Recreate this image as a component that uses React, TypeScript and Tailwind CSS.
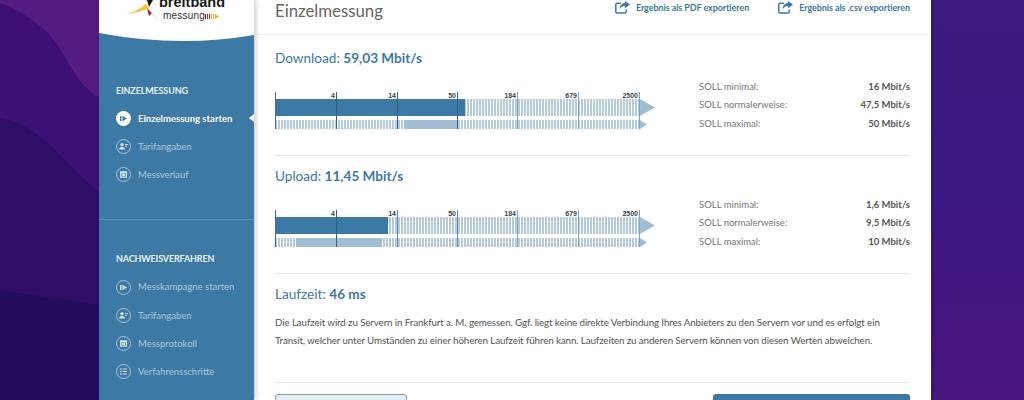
import React from 'react';

const blue = '#3d79a5';
const ticks = [
  { x: 61, label: '4' },
  { x: 122, label: '14' },
  { x: 182, label: '50' },
  { x: 242, label: '184' },
  { x: 303, label: '679' },
  { x: 364, label: '2500' },
];

type NavIconKind = 'play' | 'user' | 'calendar' | 'list';

const NavIcon = ({ kind, active }: { kind: NavIconKind; active?: boolean }) => {
  const fg = active ? blue : '#d5e3ed';
  return (
    <svg viewBox="0 0 15 15" className="w-[15px] h-[15px] shrink-0">
      <circle cx="7.5" cy="7.5" r={active ? 7.5 : 7} fill={active ? '#fff' : 'none'} stroke={active ? 'none' : '#c3d6e4'} strokeWidth="0.8" />
      {kind === 'play' && (
        <g fill={fg}>
          <rect x="4" y="5" width="1.5" height="5" />
          <path d="M6.5 4.7 11 7.5 6.5 10.3z" />
        </g>
      )}
      {kind === 'user' && (
        <g fill={fg}>
          <circle cx="6" cy="5.8" r="1.7" />
          <path d="M3 10.6c0-1.7 1.3-2.5 3-2.5s3 .8 3 2.5z" />
          <rect x="9" y="5" width="3" height="0.9" />
          <rect x="9" y="6.8" width="2" height="0.9" />
        </g>
      )}
      {kind === 'calendar' && (
        <g fill={fg}>
          <path d="M4 4.2h7v6.6H4zM5.2 6.4v3.2h4.6V6.4z" fillRule="evenodd" />
          <rect x="6" y="7" width="3" height="2" />
        </g>
      )}
      {kind === 'list' && (
        <g fill={fg}>
          <circle cx="4.8" cy="5" r="0.8" />
          <circle cx="4.8" cy="7.5" r="0.8" />
          <circle cx="4.8" cy="10" r="0.8" />
          <rect x="6.5" y="4.5" width="4.5" height="1" />
          <rect x="6.5" y="7" width="4.5" height="1" />
          <rect x="6.5" y="9.5" width="4.5" height="1" />
        </g>
      )}
    </svg>
  );
};

const NavItem = ({ kind, label, active }: { kind: NavIconKind; label: string; active?: boolean }) => (
  <div className="relative flex items-center gap-[7px] h-[28.3px] pl-[17px]">
    <NavIcon kind={kind} active={active} />
    <span className={active ? 'pt-[1px] text-[9.5px] font-bold text-white' : 'pt-[1px] text-[9.5px] text-[#aec8da]'}>{label}</span>
    {active && <span className="absolute right-0 top-[10px] w-0 h-0 border-y-[4px] border-y-transparent border-r-[5px] border-r-white" />}
  </div>
);

const Logo = () => (
  <div className="relative h-[42px] shrink-0 overflow-hidden">
    <svg viewBox="0 0 155 42" className="absolute inset-0 w-[155px] h-[42px]">
      <path d="M0 0H155V35Q80 48 0 33Z" fill="#fff" />
      <path d="M26 14Q38 12 47 4L50 8Q40 13 26 14Z" fill="#f4c430" />
      <path d="M48 0H54L50 7Z" fill="#1a1a1a" />
      <path d="M48 8 64 25 53 13 50 16Z" fill="#c8102e" />
      <rect x="106" y="14" width="1" height="5" fill="#333" />
      <g fill="#c8102e">
        <rect x="108" y="14" width="1" height="5" />
        <rect x="110" y="14" width="1" height="5" />
      </g>
      <g fill="#f4b400">
        <rect x="112" y="14" width="1" height="5" />
        <rect x="114" y="14" width="1" height="5" />
        <path d="M116 14l4 2.5-4 2.5z" />
      </g>
    </svg>
    <div className="relative pl-[60px] -mt-[5px] leading-none">
      <div className="font-['Liberation_Sans',sans-serif] text-[14.5px] font-bold text-[#1a1a1a] leading-[15px]">breitband</div>
      <div className="pl-[4px] font-['Liberation_Sans',sans-serif] text-[10px] tracking-[0.2px] text-[#333] leading-[11px]">messung</div>
    </div>
  </div>
);

const Gauge = ({ fill, light }: { fill: number; light: [number, number] }) => (
  <svg viewBox="0 0 385 54" className="w-[385px] h-[54px] shrink-0 font-['Liberation_Sans',sans-serif]">
    <defs>
      <pattern id="stripes" width="3" height="3" patternUnits="userSpaceOnUse">
        <rect width="2" height="3" fill="#b3cbdd" />
      </pattern>
    </defs>
    <rect x="0" y="22" width="365" height="17" fill="url(#stripes)" />
    <rect x="0" y="43" width="365" height="9" fill="url(#stripes)" />
    <rect x="0" y="22" width={fill} height="17" fill={blue} />
    <rect x={light[0]} y="43" width={light[1] - light[0]} height="9" fill="#a0bfd5" />
    <path d="M365 22 380 30.5 365 39Z" fill="#a0bfd5" />
    <path d="M365 43 372 47.5 365 52Z" fill="#a0bfd5" />
    <rect x="0" y="15" width="1" height="37" fill="#3a6d94" />
    {ticks.map((t) => (
      <g key={t.x}>
        <rect x={t.x} y="15" width="1" height="37" fill={t.x <= fill ? '#2f6288' : t.x > 200 ? '#7ea6c3' : '#5d8cb0'} />
        <text x={t.x - 1} y="21" textAnchor="end" fontSize="7" fontWeight="700" fill="#444">{t.label}</text>
      </g>
    ))}
  </svg>
);

const Soll = ({ rows }: { rows: [string, string][] }) => (
  <div className="w-[211px] pt-[0.5px] text-[9.5px]">
    {rows.map(([k, v]) => (
      <div key={k} className="flex justify-between items-center h-[18.5px]">
        <span className="text-[#777]">{k}</span>
        <span className="font-bold text-[#555]">{v}</span>
      </div>
    ))}
  </div>
);

const Measure = ({ title, value, pt, fill, light, rows }: { title: string; value: string; pt: string; fill: number; light: [number, number]; rows: [string, string][] }) => (
  <section className={`${pt} border-b border-[#e6e6e6]`}>
    <h2 className="h-[20px] leading-[20px] text-[13.6px] text-[#3d79a5]">
      {title}: <span className="font-bold">{value}</span>
    </h2>
    <div className="mt-[9px] flex justify-between">
      <Gauge fill={fill} light={light} />
      <Soll rows={rows} />
    </div>
  </section>
);

const ExportIcon = () => (
  <svg viewBox="0 0 15 13" className="w-[15px] h-[13px] shrink-0">
    <path d="M6 2.2H2a1.2 1.2 0 0 0-1.2 1.2v7.4A1.2 1.2 0 0 0 2 12h8a1.2 1.2 0 0 0 1.2-1.2V8.4" fill="none" stroke="currentColor" strokeWidth="1.5" />
    <path d="M10 0 15 3.6 10 7.2V5.1C7.6 5.1 5.8 5.9 4.6 8.2 4.7 5 6.6 2.3 10 2.1Z" fill="currentColor" />
  </svg>
);

const ExportLink = ({ label }: { label: string }) => (
  <a className="flex items-center gap-[6px] text-[9px] font-bold tracking-[-0.08px] text-[#3d79a5]">
    <ExportIcon />
    {label}
  </a>
);

export default function App() {
  return (
    <div className="relative h-[400px] w-[1024px] overflow-hidden bg-[#3e1a80] font-['Lato',sans-serif]">
      {/* backdrop */}
      <svg viewBox="0 0 1024 400" className="absolute inset-0 w-[1024px] h-[400px]">
        <defs>
          <linearGradient id="rightBg" x1="0" y1="0" x2="0" y2="1">
            <stop offset="0" stopColor="#3f1a80" />
            <stop offset="0.5" stopColor="#3d1785" />
            <stop offset="1" stopColor="#4a1780" />
          </linearGradient>
        </defs>
        <rect width="1024" height="400" fill="url(#rightBg)" />
        <rect width="99" height="400" fill="#561b80" />
        <path d="M0 3C25 12 50 30 62 52S85 90 99 97V400H0Z" fill="#3c1075" />
        <path d="M0 118C30 122 50 145 70 165S90 185 99 192V400H0Z" fill="#2f0e68" />
        <path d="M0 290 99 305V400H0Z" fill="#220c5c" />
      </svg>

      <div className="relative flex h-[400px] pl-[99px]">
        <aside className="relative z-10 w-[155px] h-[400px] bg-[#3d79a5] shadow-[2px_0_5px_rgba(0,0,0,0.2)] shrink-0 flex flex-col">
          <Logo />
          <h3 className="mt-[42px] pl-[17px] h-[14px] leading-[14px] text-[9px] tracking-[-0.15px] font-bold text-[#e9f2f8]">EINZELMESSUNG</h3>
          <nav className="mt-[6px]">
            <NavItem kind="play" label="Einzelmessung starten" active />
            <NavItem kind="user" label="Tarifangaben" />
            <NavItem kind="calendar" label="Messverlauf" />
          </nav>
          <div className="mt-[30px] border-t border-[#5f92b7]" />
          <h3 className="mt-[32px] pl-[17px] h-[14px] leading-[14px] text-[9px] tracking-[-0.15px] font-bold text-[#e9f2f8]">NACHWEISVERFAHREN</h3>
          <nav className="mt-[7px]">
            <NavItem kind="play" label="Messkampagne starten" />
            <NavItem kind="user" label="Tarifangaben" />
            <NavItem kind="calendar" label="Messprotokoll" />
            <NavItem kind="list" label="Verfahrensschritte" />
          </nav>
        </aside>

        <main className="w-[677px] h-[400px] bg-white shrink-0 overflow-hidden shadow-[1px_0_4px_rgba(0,0,0,0.25)]">
          <header className="h-[35px] border-b border-[#f0f0f0] flex items-start justify-between px-[21px]">
            <h1 className="text-[16.8px] leading-[22px] text-[#666]">Einzelmessung</h1>
            <div className="flex gap-[29px] pt-[1px]">
              <ExportLink label="Ergebnis als PDF exportieren" />
              <ExportLink label="Ergebnis als .csv exportieren" />
            </div>
          </header>
          <div className="px-[21px]">
            <Measure
              title="Download"
              value="59,03 Mbit/s"
              pt="pt-[13px] h-[121px]"
              fill={190}
              light={[129, 182]}
              rows={[['SOLL minimal:', '16 Mbit/s'], ['SOLL normalerweise:', '47,5 Mbit/s'], ['SOLL maximal:', '50 Mbit/s']]}
            />
            <Measure
              title="Upload"
              value="11,45 Mbit/s"
              pt="pt-[10px] h-[118px]"
              fill={113}
              light={[21, 107]}
              rows={[['SOLL minimal:', '1,6 Mbit/s'], ['SOLL normalerweise:', '9,5 Mbit/s'], ['SOLL maximal:', '10 Mbit/s']]}
            />
            <section className="pt-[10px] h-[109px] border-b border-[#e6e6e6]">
              <h2 className="h-[20px] leading-[20px] text-[13.6px] text-[#3d79a5]">
                Laufzeit: <span className="font-bold">46 ms</span>
              </h2>
              <p className="mt-[9px] text-[9.8px] tracking-[-0.12px] leading-[18px] text-[#555]">
                Die Laufzeit wird zu Servern in Frankfurt a. M. gemessen. Ggf. liegt keine direkte Verbindung Ihres Anbieters zu den Servern vor und es erfolgt ein Transit, welcher unter Umständen zu einer höheren Laufzeit führen kann. Laufzeiten zu anderen Servern können von diesen Werten abweichen.
              </p>
            </section>
            <div className="flex justify-between pt-[11px]">
              <button className="w-[132px] h-[36px] rounded-[3px] border border-[#7f9db5] bg-[#e4eef5]" />
              <button className="w-[197px] h-[36px] rounded-[3px] bg-[#3d79a5]" />
            </div>
          </div>
        </main>
      </div>
    </div>
  );
}
